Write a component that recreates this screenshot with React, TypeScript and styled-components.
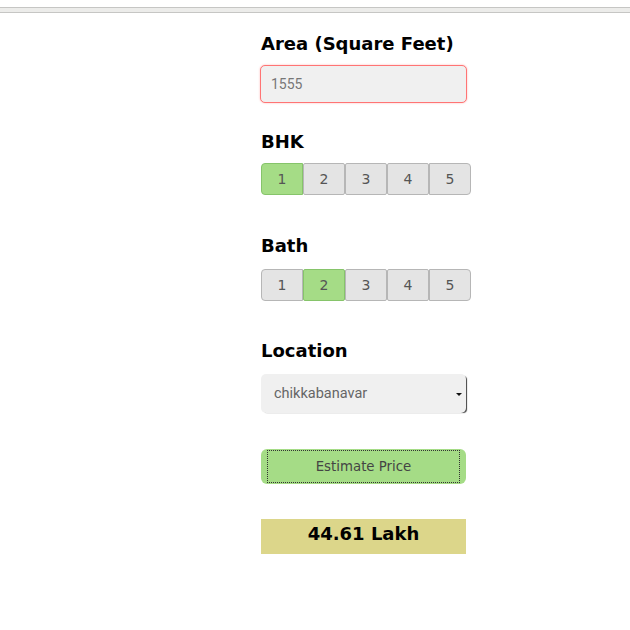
import React, { useState } from 'react';
import styled, { createGlobalStyle } from 'styled-components';

const GlobalStyle = createGlobalStyle`
  body {
    margin: 0;
    background: #fff;
    font-family: "DejaVu Sans", sans-serif;
  }
`;

const TopBar = styled.div`
  margin-top: 7px;
  height: 4px;
  border-top: 1px solid #c6c6c4;
  border-bottom: 1px solid #c6c6c4;
  background: #ececea;
`;

const Form = styled.form`
  width: 205px;
  margin-left: 261px;
  padding-top: 20px;
  display: flex;
  flex-direction: column;
`;

const Label = styled.h2<{ gap: number; below: number }>`
  margin: ${p => p.gap}px 0 ${p => p.below}px;
  font-family: "DejaVu Sans", sans-serif;
  font-size: 18px;
  line-height: 21px;
  font-weight: bold;
  color: #000;
`;

const AreaInput = styled.input`
  box-sizing: border-box;
  width: 207px;
  height: 38px;
  margin-left: -1px;
  padding: 0 10px;
  border: 1.5px solid #ff7474;
  border-radius: 5px;
  box-shadow: 0 0 2px rgba(255, 120, 120, 0.6);
  background: #f0f0f0;
  font-family: Roboto, sans-serif;
  font-size: 14px;
  color: #777;
  outline: none;

  &::placeholder {
    color: #777;
  }
`;

const Segments = styled.div`
  display: flex;
  width: 210px;
`;

const Segment = styled.div<{ selected: boolean; first: boolean; last: boolean }>`
  box-sizing: border-box;
  flex: 1;
  height: 32px;
  display: flex;
  align-items: center;
  justify-content: center;
  border: 1.5px solid ${p => (p.selected ? '#86c46a' : '#b6b6b6')};
  border-radius: ${p => (p.first ? '4px 0 0 4px' : p.last ? '0 4px 4px 0' : '2px')};
  background: ${p => (p.selected ? '#a5dc86' : '#e4e4e4')};
  font-family: "DejaVu Sans", sans-serif;
  font-size: 14px;
  color: #555;
  cursor: pointer;
`;

const SelectWrap = styled.div`
  position: relative;
  width: 205px;

  &::after {
    content: '';
    position: absolute;
    right: 4px;
    top: 19px;
    border-left: 3px solid transparent;
    border-right: 3px solid transparent;
    border-top: 3px solid #111;
    pointer-events: none;
  }
`;

const Select = styled.select`
  box-sizing: border-box;
  width: 205px;
  height: 39px;
  padding: 0 13px;
  border: none;
  border-radius: 5px;
  background: #f0f0f0;
  box-shadow: 2px 1px 1px -1px rgba(0, 0, 0, 0.75);
  appearance: none;
  font-family: Roboto, sans-serif;
  font-size: 14.5px;
  color: #666;
  outline: none;
`;

const EstimateButton = styled.button`
  position: relative;
  margin-top: 36px;
  width: 205px;
  height: 35px;
  border: none;
  border-radius: 6px;
  background: #a5dc86;
  font-family: "DejaVu Sans", sans-serif;
  font-size: 13.33px;
  color: #444;
  cursor: pointer;

  &::after {
    content: '';
    position: absolute;
    inset: 1px 6px;
    border: 1px dotted #333;
  }
`;

const Result = styled.div`
  margin-top: 35px;
  height: 35px;
  box-sizing: border-box;
  padding-top: 3px;
  background: #dcd68a;
  text-align: center;
  font-family: "DejaVu Sans", sans-serif;
  font-size: 18px;
  line-height: 23px;
  font-weight: bold;
  color: #000;
`;

const options = [1, 2, 3, 4, 5];

function SegmentGroup({ value, onChange }: { value: number; onChange: (v: number) => void }) {
  return (
    <Segments>
      {options.map((n, i) => (
        <Segment
          key={n}
          selected={n === value}
          first={i === 0}
          last={i === options.length - 1}
          onClick={() => onChange(n)}
        >
          {n}
        </Segment>
      ))}
    </Segments>
  );
}

export default function App() {
  const [bhk, setBhk] = useState(1);
  const [bath, setBath] = useState(2);

  return (
    <>
      <GlobalStyle />
      <TopBar />
      <Form onSubmit={e => e.preventDefault()}>
        <Label gap={0} below={11}>Area (Square Feet)</Label>
        <AreaInput type="text" placeholder="1555" />
        <Label gap={28} below={11}>BHK</Label>
        <SegmentGroup value={bhk} onChange={setBhk} />
        <Label gap={40} below={13}>Bath</Label>
        <SegmentGroup value={bath} onChange={setBath} />
        <Label gap={39} below={13}>Location</Label>
        <SelectWrap>
          <Select defaultValue="chikkabanavar">
            <option value="chikkabanavar">chikkabanavar</option>
            <option value="whitefield">whitefield</option>
            <option value="yelahanka">yelahanka</option>
          </Select>
        </SelectWrap>
        <EstimateButton type="button">Estimate Price</EstimateButton>
        <Result>44.61 Lakh</Result>
      </Form>
    </>
  );
}
